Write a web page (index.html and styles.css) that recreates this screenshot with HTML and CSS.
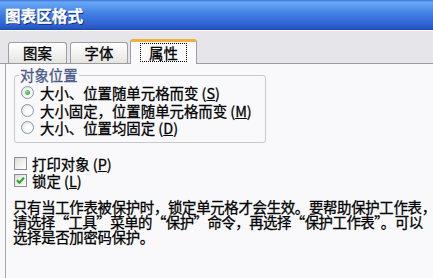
FILE: index.html
```html
<!DOCTYPE html>
<html lang="zh-CN">
<head>
<meta charset="utf-8">
<title>图表区格式</title>
<link rel="stylesheet" href="styles.css">
</head>
<body>
<div class="window">
  <div class="titlebar"><span class="title">图表区格式</span></div>
  <div class="tabstrip">
    <div class="tab">图案</div>
    <div class="tab">字体</div>
    <div class="tab active"><span class="focus">属性</span></div>
  </div>
  <div class="panel">
    <fieldset class="group">
      <legend class="legend">对象位置</legend>
      <div class="option"><span class="radio checked"></span><span>大小、位置随单元格而变 (<u>S</u>)</span></div>
      <div class="option"><span class="radio"></span><span>大小固定，位置随单元格而变 (<u>M</u>)</span></div>
      <div class="option"><span class="radio"></span><span>大小、位置均固定 (<u>D</u>)</span></div>
    </fieldset>
    <div class="checks">
      <div class="check-row"><span class="checkbox"></span><span>打印对象 (<u>P</u>)</span></div>
      <div class="check-row"><span class="checkbox checked"><svg viewBox="0 0 13 13" width="13" height="13"><path d="M3 6.2 L5.4 8.8 L10 3.8" fill="none" stroke="#22a822" stroke-width="2"/></svg></span><span>锁定 (<u>L</u>)</span></div>
    </div>
    <p class="note">只有当工作表被保护时，锁定单元格才会生效。要帮助保护工作表，<br><span class="tight">请选择“工具”菜单的“保护”命令，再选择“保护工作表”。可以</span><br>选择是否加密码保护。</p>
  </div>
</div>
</body>
</html>
```
FILE: styles.css
```css
html, body {
  margin: 0;
  padding: 0;
}
body {
  width: 433px;
  height: 278px;
  overflow: hidden;
  background: #f8f8fb;
  font-family: "Noto Sans CJK SC", "Noto Sans", sans-serif;
  font-size: 14.4px;
  color: #000;
  -webkit-text-stroke: 0.3px currentColor;
}
.window {
  display: flex;
  flex-direction: column;
  height: 278px;
}
.titlebar {
  height: 31px;
  box-sizing: border-box;
  display: flex;
  align-items: center;
  padding-left: 5px;
  background: linear-gradient(to bottom,
    #3a6fd6 0px, #6aa8f5 2px, #5d9bf0 6px, #4a88e8 11px,
    #3a76de 17px, #2f64d2 24px, #2858c4 28px, #1c3c92 31px);
  border-bottom: 1px solid #fdfdff;
}
.title {
  color: #fff;
  font-weight: bold;
  font-size: 15.6px;
  line-height: 18px;
  text-shadow: 1px 1px 0 #0b2a78;
}
.tabstrip {
  height: 33px;
  box-sizing: border-box;
  display: flex;
  align-items: flex-end;
  gap: 3px;
  padding-left: 8px;
  background: #e6e6ea;
  border-bottom: 1px solid #9c9c9c;
}
.tab {
  width: 59px;
  height: 21px;
  box-sizing: border-box;
  border: 1px solid #9aa0a6;
  border-bottom: none;
  border-radius: 3px 3px 0 0;
  background: linear-gradient(to bottom, #ffffff, #f0f0ee 60%, #e4e4e0);
  display: flex;
  align-items: center;
  justify-content: center;
  line-height: 16px;
}
.tab:nth-child(2) {
  width: 58px;
}
.tab.active {
  width: 67px;
  height: 25px;
  margin-left: -1px;
  margin-bottom: -1px;
  background: #fbfbfd;
  border-top: 3px solid #f0b040;
  border-color: #f0b040 #9aa0a6 #9aa0a6 #9aa0a6;
  align-items: flex-start;
  padding-top: 1px;
}
.focus {
  border: 1px dotted #000;
  padding: 0 8px;
  line-height: 17px;
}
.panel {
  flex: 1;
  margin-left: 5px;
  border-left: 1px solid #a8a8a8;
  background: #f9f9fb;
  padding-left: 8px;
  padding-top: 4px;
}
.group {
  width: 252px;
  box-sizing: border-box;
  margin: 0;
  padding: 2px 0 5px 6px;
  border: 1px solid #c8c8cc;
  border-radius: 3px;
  min-width: 0;
}
.legend {
  padding: 0 1px;
  margin-left: -2px;
  color: #4a5a86;
  line-height: 14px;
}
.option {
  display: flex;
  align-items: center;
  gap: 6px;
  height: 17.5px;
  line-height: 17px;
  white-space: nowrap;
}
.radio {
  width: 13px;
  height: 13px;
  box-sizing: border-box;
  border: 1px solid #8496ae;
  border-radius: 50%;
  background: radial-gradient(circle at 62% 62%, #ffffff 25%, #dcdcd6 100%);
  display: flex;
  align-items: center;
  justify-content: center;
  flex: none;
}
.radio.checked::after {
  content: "";
  width: 5px;
  height: 5px;
  border-radius: 50%;
  background: radial-gradient(circle at 35% 35%, #8ee08e, #249424);
}
.checks {
  margin-top: 12px;
  display: flex;
  flex-direction: column;
}
.check-row {
  display: flex;
  align-items: center;
  gap: 5px;
  height: 17px;
  line-height: 17px;
  white-space: nowrap;
}
.checkbox {
  width: 13px;
  height: 13px;
  box-sizing: border-box;
  border: 1px solid #8a8e96;
  background: linear-gradient(135deg, #dcdcd6, #f6f6f4 70%, #ffffff);
  flex: none;
  position: relative;
}
.checkbox svg {
  position: absolute;
  left: -1px;
  top: -1px;
}
.note {
  margin: 10px 0 0 -1px;
  line-height: 15px;
  white-space: nowrap;
  letter-spacing: -0.3px;
}
.tight {
  letter-spacing: -0.5px;
}
u {
  text-decoration: underline;
  text-underline-offset: 1px;
}
```
